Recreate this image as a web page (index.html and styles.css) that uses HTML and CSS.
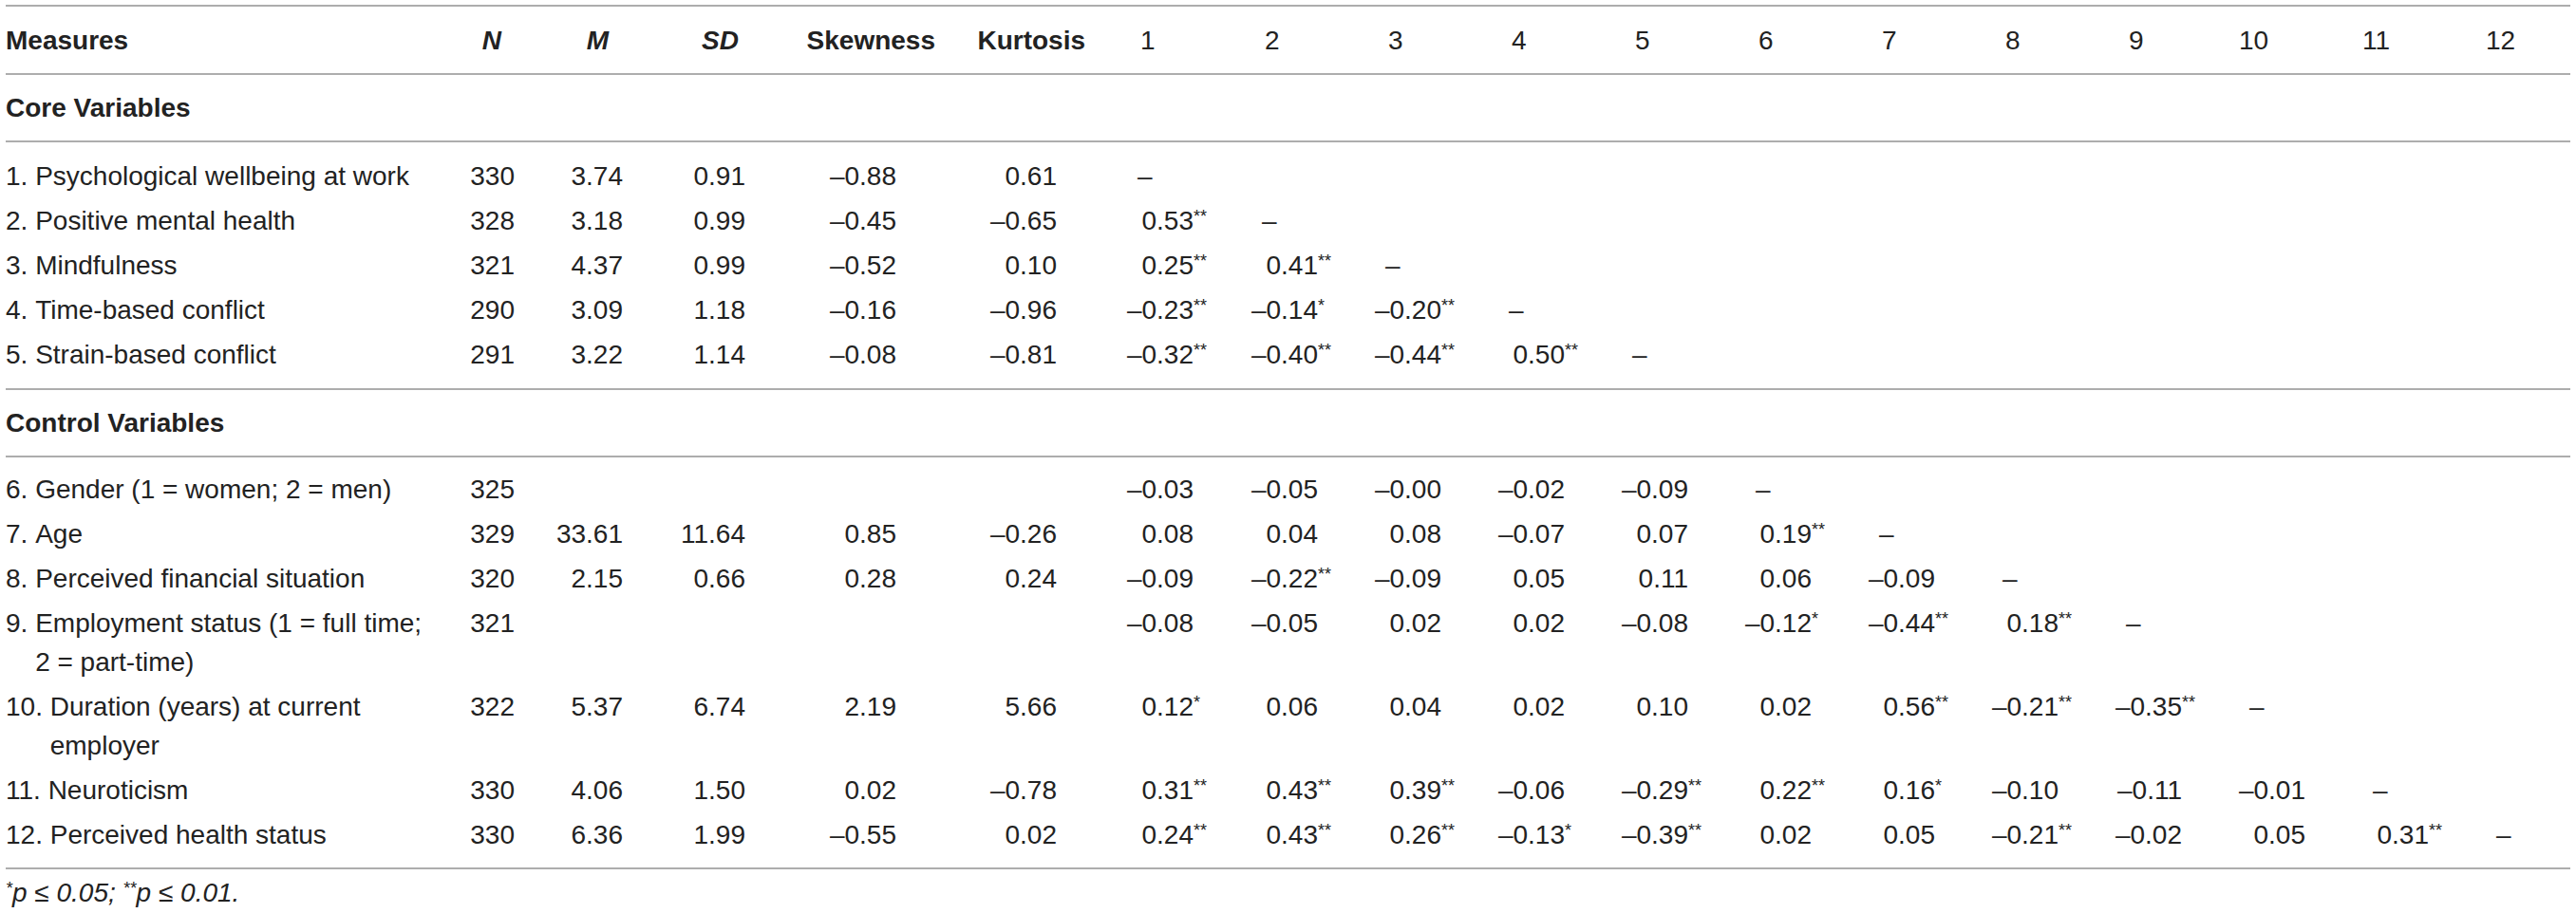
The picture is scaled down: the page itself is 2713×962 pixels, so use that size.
FILE: index.html
```html
<!DOCTYPE html>
<html lang="en">
<head>
<meta charset="utf-8">
<title>Descriptive statistics and correlations</title>
<link rel="stylesheet" href="styles.css">
</head>
<body>
<table class="tbl">
<colgroup>
<col class="w-lab"><col class="w-n"><col class="w-m"><col class="w-sd"><col class="w-sk"><col class="w-ku">
<col class="w-c1"><col class="w-c"><col class="w-c"><col class="w-c"><col class="w-c"><col class="w-c"><col class="w-c"><col class="w-c"><col class="w-c"><col class="w-c"><col class="w-c"><col class="w-cl">
</colgroup>
<thead>
<tr class="head">
<th class="lab">Measures</th>
<th class="cN"><i>N</i></th>
<th class="cM"><i>M</i></th>
<th class="cSD"><i>SD</i></th>
<th class="cSk">Skewness</th>
<th class="cKu">Kurtosis</th>
<th class="c c1"><span class="h">1</span></th>
<th class="c"><span class="h">2</span></th>
<th class="c"><span class="h">3</span></th>
<th class="c"><span class="h">4</span></th>
<th class="c"><span class="h">5</span></th>
<th class="c"><span class="h">6</span></th>
<th class="c"><span class="h">7</span></th>
<th class="c"><span class="h">8</span></th>
<th class="c"><span class="h">9</span></th>
<th class="c"><span class="h h2">10</span></th>
<th class="c"><span class="h h2">11</span></th>
<th class="c"><span class="h h2">12</span></th>
</tr>
</thead>
<tbody>
<tr class="sec"><td colspan="18">Core Variables</td></tr>
<tr class="first core">
<td class="lab"><div class="lb"><span class="ix">1.&nbsp;</span><span>Psychological wellbeing at work</span></div></td>
<td class="cN">330</td><td class="cM">3.74</td><td class="cSD">0.91</td><td class="cSk">–0.88</td><td class="cKu">0.61</td>
<td class="c c1"><span class="n d">–</span></td>
<td></td><td></td><td></td><td></td><td></td><td></td><td></td><td></td><td></td><td></td><td></td>
</tr>
<tr>
<td class="lab"><div class="lb"><span class="ix">2.&nbsp;</span><span>Positive mental health</span></div></td>
<td class="cN">328</td><td class="cM">3.18</td><td class="cSD">0.99</td><td class="cSk">–0.45</td><td class="cKu">–0.65</td>
<td class="c c1"><span class="n">0.53</span><sup>**</sup></td>
<td class="c"><span class="n d">–</span></td>
<td></td><td></td><td></td><td></td><td></td><td></td><td></td><td></td><td></td><td></td>
</tr>
<tr>
<td class="lab"><div class="lb"><span class="ix">3.&nbsp;</span><span>Mindfulness</span></div></td>
<td class="cN">321</td><td class="cM">4.37</td><td class="cSD">0.99</td><td class="cSk">–0.52</td><td class="cKu">0.10</td>
<td class="c c1"><span class="n">0.25</span><sup>**</sup></td>
<td class="c"><span class="n">0.41</span><sup>**</sup></td>
<td class="c"><span class="n d">–</span></td>
<td></td><td></td><td></td><td></td><td></td><td></td><td></td><td></td><td></td>
</tr>
<tr>
<td class="lab"><div class="lb"><span class="ix">4.&nbsp;</span><span>Time-based conflict</span></div></td>
<td class="cN">290</td><td class="cM">3.09</td><td class="cSD">1.18</td><td class="cSk">–0.16</td><td class="cKu">–0.96</td>
<td class="c c1"><span class="n">–0.23</span><sup>**</sup></td>
<td class="c"><span class="n">–0.14</span><sup>*</sup></td>
<td class="c"><span class="n">–0.20</span><sup>**</sup></td>
<td class="c"><span class="n d">–</span></td>
<td></td><td></td><td></td><td></td><td></td><td></td><td></td><td></td>
</tr>
<tr class="last core">
<td class="lab"><div class="lb"><span class="ix">5.&nbsp;</span><span>Strain-based conflict</span></div></td>
<td class="cN">291</td><td class="cM">3.22</td><td class="cSD">1.14</td><td class="cSk">–0.08</td><td class="cKu">–0.81</td>
<td class="c c1"><span class="n">–0.32</span><sup>**</sup></td>
<td class="c"><span class="n">–0.40</span><sup>**</sup></td>
<td class="c"><span class="n">–0.44</span><sup>**</sup></td>
<td class="c"><span class="n">0.50</span><sup>**</sup></td>
<td class="c"><span class="n d">–</span></td>
<td></td><td></td><td></td><td></td><td></td><td></td><td></td>
</tr>
<tr class="sec"><td colspan="18">Control Variables</td></tr>
<tr class="first ctrl">
<td class="lab"><div class="lb"><span class="ix">6.&nbsp;</span><span>Gender (1 = women; 2 = men)</span></div></td>
<td class="cN">325</td><td class="cM"></td><td class="cSD"></td><td class="cSk"></td><td class="cKu"></td>
<td class="c c1"><span class="n">–0.03</span></td>
<td class="c"><span class="n">–0.05</span></td>
<td class="c"><span class="n">–0.00</span></td>
<td class="c"><span class="n">–0.02</span></td>
<td class="c"><span class="n">–0.09</span></td>
<td class="c"><span class="n d">–</span></td>
<td></td><td></td><td></td><td></td><td></td><td></td>
</tr>
<tr>
<td class="lab"><div class="lb"><span class="ix">7.&nbsp;</span><span>Age</span></div></td>
<td class="cN">329</td><td class="cM">33.61</td><td class="cSD">11.64</td><td class="cSk">0.85</td><td class="cKu">–0.26</td>
<td class="c c1"><span class="n">0.08</span></td>
<td class="c"><span class="n">0.04</span></td>
<td class="c"><span class="n">0.08</span></td>
<td class="c"><span class="n">–0.07</span></td>
<td class="c"><span class="n">0.07</span></td>
<td class="c"><span class="n">0.19</span><sup>**</sup></td>
<td class="c"><span class="n d">–</span></td>
<td></td><td></td><td></td><td></td><td></td>
</tr>
<tr>
<td class="lab"><div class="lb"><span class="ix">8.&nbsp;</span><span>Perceived financial situation</span></div></td>
<td class="cN">320</td><td class="cM">2.15</td><td class="cSD">0.66</td><td class="cSk">0.28</td><td class="cKu">0.24</td>
<td class="c c1"><span class="n">–0.09</span></td>
<td class="c"><span class="n">–0.22</span><sup>**</sup></td>
<td class="c"><span class="n">–0.09</span></td>
<td class="c"><span class="n">0.05</span></td>
<td class="c"><span class="n">0.11</span></td>
<td class="c"><span class="n">0.06</span></td>
<td class="c"><span class="n">–0.09</span></td>
<td class="c"><span class="n d">–</span></td>
<td></td><td></td><td></td><td></td>
</tr>
<tr>
<td class="lab"><div class="lb"><span class="ix">9.&nbsp;</span><span>Employment status (1 = full time; 2 = part-time)</span></div></td>
<td class="cN">321</td><td class="cM"></td><td class="cSD"></td><td class="cSk"></td><td class="cKu"></td>
<td class="c c1"><span class="n">–0.08</span></td>
<td class="c"><span class="n">–0.05</span></td>
<td class="c"><span class="n">0.02</span></td>
<td class="c"><span class="n">0.02</span></td>
<td class="c"><span class="n">–0.08</span></td>
<td class="c"><span class="n">–0.12</span><sup>*</sup></td>
<td class="c"><span class="n">–0.44</span><sup>**</sup></td>
<td class="c"><span class="n">0.18</span><sup>**</sup></td>
<td class="c"><span class="n d">–</span></td>
<td></td><td></td><td></td>
</tr>
<tr>
<td class="lab"><div class="lb"><span class="ix">10.&nbsp;</span><span>Duration (years) at current employer</span></div></td>
<td class="cN">322</td><td class="cM">5.37</td><td class="cSD">6.74</td><td class="cSk">2.19</td><td class="cKu">5.66</td>
<td class="c c1"><span class="n">0.12</span><sup>*</sup></td>
<td class="c"><span class="n">0.06</span></td>
<td class="c"><span class="n">0.04</span></td>
<td class="c"><span class="n">0.02</span></td>
<td class="c"><span class="n">0.10</span></td>
<td class="c"><span class="n">0.02</span></td>
<td class="c"><span class="n">0.56</span><sup>**</sup></td>
<td class="c"><span class="n">–0.21</span><sup>**</sup></td>
<td class="c"><span class="n">–0.35</span><sup>**</sup></td>
<td class="c"><span class="n d">–</span></td>
<td></td><td></td>
</tr>
<tr>
<td class="lab"><div class="lb"><span class="ix">11.&nbsp;</span><span>Neuroticism</span></div></td>
<td class="cN">330</td><td class="cM">4.06</td><td class="cSD">1.50</td><td class="cSk">0.02</td><td class="cKu">–0.78</td>
<td class="c c1"><span class="n">0.31</span><sup>**</sup></td>
<td class="c"><span class="n">0.43</span><sup>**</sup></td>
<td class="c"><span class="n">0.39</span><sup>**</sup></td>
<td class="c"><span class="n">–0.06</span></td>
<td class="c"><span class="n">–0.29</span><sup>**</sup></td>
<td class="c"><span class="n">0.22</span><sup>**</sup></td>
<td class="c"><span class="n">0.16</span><sup>*</sup></td>
<td class="c"><span class="n">–0.10</span></td>
<td class="c"><span class="n">–0.11</span></td>
<td class="c"><span class="n">–0.01</span></td>
<td class="c"><span class="n d">–</span></td>
<td></td>
</tr>
<tr class="last ctrl">
<td class="lab"><div class="lb"><span class="ix">12.&nbsp;</span><span>Perceived health status</span></div></td>
<td class="cN">330</td><td class="cM">6.36</td><td class="cSD">1.99</td><td class="cSk">–0.55</td><td class="cKu">0.02</td>
<td class="c c1"><span class="n">0.24</span><sup>**</sup></td>
<td class="c"><span class="n">0.43</span><sup>**</sup></td>
<td class="c"><span class="n">0.26</span><sup>**</sup></td>
<td class="c"><span class="n">–0.13</span><sup>*</sup></td>
<td class="c"><span class="n">–0.39</span><sup>**</sup></td>
<td class="c"><span class="n">0.02</span></td>
<td class="c"><span class="n">0.05</span></td>
<td class="c"><span class="n">–0.21</span><sup>**</sup></td>
<td class="c"><span class="n">–0.02</span></td>
<td class="c"><span class="n">0.05</span></td>
<td class="c"><span class="n">0.31</span><sup>**</sup></td>
<td class="c"><span class="n d">–</span></td>
</tr>
</tbody>
</table>
<p class="note"><sup>*</sup>p ≤ 0.05; <sup>**</sup>p ≤ 0.01.</p>
</body>
</html>
```

FILE: styles.css
```css
html, body {
  margin: 0;
  background: #ffffff;
}
body {
  padding: 5px 0 0 6px;
  font-family: "Liberation Sans", Arial, sans-serif;
  font-size: 28px;
  line-height: 41px;
  color: #222222;
}
.tbl {
  width: 2701px;
  table-layout: fixed;
  border-collapse: collapse;
  border-top: 2px solid #adadad;
}
.w-lab { width: 464px; }
.w-n { width: 100px; }
.w-m { width: 120px; }
.w-sd { width: 120px; }
.w-sk { width: 190px; }
.w-ku { width: 160px; }
.w-c1 { width: 151px; }
.w-c { width: 130px; }
.w-cl { width: 96px; }

.tbl th,
.tbl td {
  padding: 3px 0;
  vertical-align: top;
  text-align: right;
  white-space: nowrap;
  font-weight: normal;
}
.tbl th i { font-style: italic; }

.head th {
  padding-top: 15px;
  padding-bottom: 14px;
  font-weight: bold;
}
.head { border-bottom: 2px solid #adadad; }

.tbl .lab {
  text-align: left;
  white-space: normal;
  padding-right: 14px;
}
.lb { display: flex; }
.ix { flex: none; white-space: pre; }

.tbl .cN { padding-right: 28px; }
.tbl .cM { padding-right: 34px; }
.tbl .cSD { padding-right: 25px; }
.tbl .cSk { padding-right: 56px; }
.tbl .cKu { padding-right: 47px; }
.head .cN { padding-right: 42px; }
.head .cM { padding-right: 49px; }
.head .cSD { padding-right: 32px; }
.head .cSk { padding-right: 15px; }
.head .cKu { padding-right: 17px; }

.tbl .c {
  text-align: left;
  padding-left: 3px;
}
.tbl .c1 { padding-left: 23px; }
.head .c { font-weight: normal; }

.n {
  display: inline-block;
  width: 74px;
  text-align: right;
}
.n.d {
  text-align: left;
  padding-left: 15px;
  box-sizing: border-box;
}
.h {
  display: inline-block;
  padding-left: 18px;
}
.h.h2 { padding-left: 4px; }

sup {
  font-size: 18px;
  line-height: 0;
  vertical-align: 8px;
}

.sec td {
  text-align: left;
  font-weight: bold;
  padding-top: 14px;
  padding-bottom: 14px;
}
.sec { border-bottom: 2px solid #adadad; }

.core.first td { padding-top: 15px; }
.core.last td { padding-bottom: 15px; }
.ctrl.first td { padding-top: 13px; }
.ctrl.last td { padding-bottom: 14px; }
.tbl tr.last { border-bottom: 2px solid #adadad; }

.note {
  margin: 4px 0 0;
  font-style: italic;
}
.note sup { font-style: italic; }
```
